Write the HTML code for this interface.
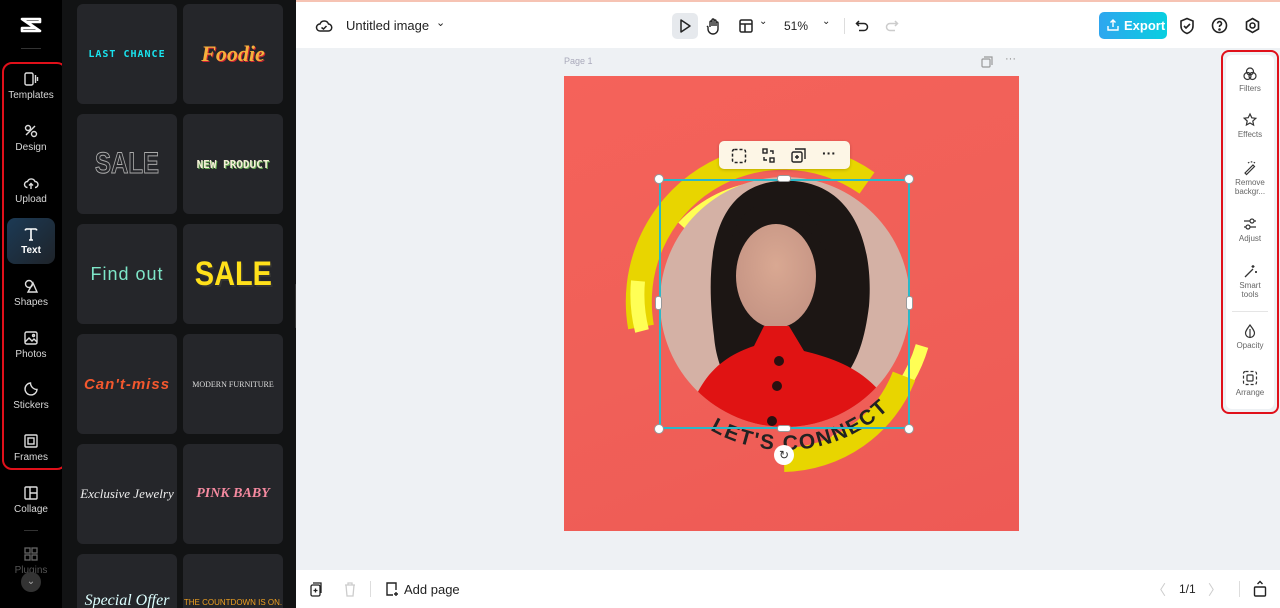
<!DOCTYPE html>
<html><head><meta charset="utf-8">
<style>
*{box-sizing:border-box;margin:0;padding:0}
html,body{width:1280px;height:608px;overflow:hidden}
body{font-family:"Liberation Sans",sans-serif;background:#eef1f4;position:relative}
.abs{position:absolute}
#rail{left:0;top:0;width:62px;height:608px;background:#000;overflow:hidden}
#panel{left:62px;top:0;width:234px;height:608px;background:#121314;overflow:hidden}
.ri{position:absolute;left:0;width:62px;text-align:center;color:#d8d8d8;font-size:10px}
.ri svg{display:block;margin:0 auto 3px}
.card{position:absolute;width:100px;height:100px;background:#25262a;border-radius:6px;display:flex;align-items:center;justify-content:center;overflow:hidden}
#top{left:296px;top:0;width:984px;height:48px;background:#fff;border-top:2px solid #f6c3b3}
#bot{left:296px;top:570px;width:984px;height:38px;background:#fff}
.rp{position:absolute;left:0;width:48px;text-align:center;font-size:8px;color:#666}
.rp svg{display:block;margin:0 auto 2px}
.h{position:absolute;background:#fff;border:1px solid #999;z-index:5}
</style></head><body>
<div id="rail" class="abs">
  <svg class="abs" style="left:19px;top:16px" width="24" height="18" viewBox="0 0 24 18"><path d="M3 3 L21 3 L21 6 L8 6 L21 15 L3 15 L3 12 L16 12 Z" fill="none" stroke="#fff" stroke-width="2.6" stroke-linejoin="round"/></svg>
  <div class="abs" style="left:21px;top:48px;width:20px;height:1px;background:#333"></div>
  <div class="abs" style="left:2px;top:62px;width:65px;height:408px;border:2px solid #e0101a;border-radius:10px"></div>
  <div class="abs" style="left:7px;top:218px;width:48px;height:46px;border-radius:8px;background:linear-gradient(135deg,#1c3a55,#1e2329)"></div>
  <div class="ri" style="top:71px"><svg width="16" height="16" viewBox="0 0 16 16" fill="none" stroke="#ddd" stroke-width="1.4"><rect x="2" y="2" width="8" height="12" rx="1.5"/><path d="M12.5 4v8M14.5 6v4"/></svg>Templates</div>
  <div class="ri" style="top:123px"><svg width="16" height="16" viewBox="0 0 16 16" fill="none" stroke="#ddd" stroke-width="1.4"><circle cx="5" cy="5" r="2.5"/><circle cx="11" cy="11" r="2.5"/><path d="M3 12L12 3"/></svg>Design</div>
  <div class="ri" style="top:175px"><svg width="16" height="16" viewBox="0 0 16 16" fill="none" stroke="#ddd" stroke-width="1.4"><path d="M4.5 12.5a3 3 0 0 1 0-6 4 4 0 0 1 7.5 0 3 3 0 0 1 0 6M8 14V8.5M6 10.5l2-2 2 2"/></svg>Upload</div>
  <div class="ri" style="top:226px;color:#fff;font-weight:bold"><svg width="16" height="16" viewBox="0 0 16 16" fill="none" stroke="#fff" stroke-width="1.6"><path d="M2.5 3h11M8 3v11M2.5 3v1.5M13.5 3v1.5M6 14h4"/></svg>Text</div>
  <div class="ri" style="top:278px"><svg width="16" height="16" viewBox="0 0 16 16" fill="none" stroke="#ddd" stroke-width="1.4"><circle cx="6" cy="6" r="3.5"/><path d="M10 5l4 9H5z"/></svg>Shapes</div>
  <div class="ri" style="top:330px"><svg width="16" height="16" viewBox="0 0 16 16" fill="none" stroke="#ddd" stroke-width="1.4"><rect x="2" y="2" width="12" height="12" rx="1.5"/><path d="M2 12l4-4 3 3 2-2 3 3"/><circle cx="10.5" cy="5.5" r="1"/></svg>Photos</div>
  <div class="ri" style="top:381px"><svg width="16" height="16" viewBox="0 0 16 16" fill="none" stroke="#ddd" stroke-width="1.4"><path d="M14 8.5A6 6 0 1 1 7.5 2c0 3.5 3 6.5 6.5 6.5z"/></svg>Stickers</div>
  <div class="ri" style="top:433px"><svg width="16" height="16" viewBox="0 0 16 16" fill="none" stroke="#ddd" stroke-width="1.4"><rect x="2" y="2" width="12" height="12" rx="1"/><rect x="5" y="5" width="6" height="6"/></svg>Frames</div>
  <div class="ri" style="top:485px"><svg width="16" height="16" viewBox="0 0 16 16" fill="none" stroke="#ddd" stroke-width="1.4"><rect x="2" y="2" width="12" height="12" rx="1"/><path d="M7 2v12M7 8h7"/></svg>Collage</div>
  <div class="abs" style="left:24px;top:530px;width:14px;height:1px;background:#333"></div>
  <div class="ri" style="top:546px;color:#555"><svg width="16" height="16" viewBox="0 0 16 16" fill="none" stroke="#666" stroke-width="1.3"><rect x="2" y="2" width="5" height="5"/><rect x="9" y="2" width="5" height="5"/><rect x="2" y="9" width="5" height="5"/><rect x="9" y="9" width="5" height="5"/></svg>Plugins</div>
  <div class="abs" style="left:21px;top:572px;width:20px;height:20px;border-radius:50%;background:#333;color:#aaa;font-size:10px;text-align:center;line-height:20px">&#8964;</div>
</div>
<div id="panel" class="abs">
  <div class="card" style="left:15px;top:4px"><span style="color:#19e3ee;font-family:'DejaVu Sans Mono',monospace;font-weight:bold;font-size:10px;letter-spacing:1px">LAST CHANCE</span></div>
  <div class="card" style="left:121px;top:4px"><span style="color:#f6b03c;font-family:'Liberation Serif',serif;font-style:italic;font-weight:bold;font-size:22px;text-shadow:1px 1px 0 #c23">Foodie</span></div>
  <div class="card" style="left:15px;top:114px"><span style="color:transparent;-webkit-text-stroke:1px #aaa;font-weight:bold;font-size:30px;transform:scaleX(.8);display:inline-block">SALE</span></div>
  <div class="card" style="left:121px;top:114px"><span style="color:#f5f0d8;font-family:'DejaVu Sans Mono',monospace;font-weight:bold;font-size:11px;text-shadow:1px 1px 0 #6a5">NEW PRODUCT</span></div>
  <div class="card" style="left:15px;top:224px"><span style="color:#7ee6c8;font-size:18px;letter-spacing:1px">Find out</span></div>
  <div class="card" style="left:121px;top:224px"><span style="color:#ffe01a;font-weight:bold;font-size:34px;transform:scaleX(.85);display:inline-block;text-shadow:2px 2px 0 #333">SALE</span></div>
  <div class="card" style="left:15px;top:334px"><span style="color:#f4582e;font-weight:bold;font-style:italic;font-size:15px;letter-spacing:1px">Can't-miss</span></div>
  <div class="card" style="left:121px;top:334px"><span style="color:#ddd;font-family:'Liberation Serif',serif;font-size:8px">MODERN FURNITURE</span></div>
  <div class="card" style="left:15px;top:444px"><span style="color:#eee;font-family:'Liberation Serif',serif;font-style:italic;font-size:13px">Exclusive Jewelry</span></div>
  <div class="card" style="left:121px;top:444px"><span style="color:#f58aa0;font-family:'Liberation Serif',serif;font-weight:bold;font-style:italic;font-size:14px">PINK BABY</span></div>
  <div class="card" style="left:15px;top:554px;height:54px;border-radius:6px 6px 0 0;align-items:flex-start;padding-top:38px"><span style="color:#dff;font-family:'Liberation Serif',serif;font-style:italic;font-size:16px">Special Offer</span></div>
  <div class="card" style="left:121px;top:554px;height:54px;border-radius:6px 6px 0 0;align-items:flex-start;padding-top:44px"><span style="color:#f0a020;font-size:8px">THE COUNTDOWN IS ON.</span></div>
  <div class="abs" style="left:233px;top:284px;width:6px;height:44px;background:#333;border-radius:0 6px 6px 0"></div>
</div>
<div id="top" class="abs">
  <svg class="abs" style="left:19px;top:16px" width="18" height="16" viewBox="0 0 18 16" fill="none" stroke="#222" stroke-width="1.5"><path d="M5 13a3.5 3.5 0 0 1 0-7 4.5 4.5 0 0 1 8.5 0A3.5 3.5 0 0 1 13 13z"/><path d="M6.5 9.5l2 1.5 3-3"/></svg>
  <div class="abs" style="left:50px;top:16px;font-size:13px;color:#222">Untitled image</div>
  <div class="abs" style="left:140px;top:14px;font-size:11px;color:#222">&#8964;</div>
  <div class="abs" style="left:376px;top:11px;width:26px;height:26px;border-radius:5px;background:#e6e9ed"></div>
  <svg class="abs" style="left:382px;top:16px" width="14" height="16" viewBox="0 0 14 16" fill="none" stroke="#222" stroke-width="1.5"><path d="M3 2l9 6-9 6z" stroke-linejoin="round"/></svg>
  <svg class="abs" style="left:410px;top:15px" width="16" height="18" viewBox="0 0 16 18" fill="none" stroke="#222" stroke-width="1.4"><path d="M4 10V5a1 1 0 0 1 2 0v4V3a1 1 0 0 1 2 0v6V4a1 1 0 0 1 2 0v5V6a1 1 0 0 1 2 0v6a5 5 0 0 1-10 0v-2l-1-1"/></svg>
  <svg class="abs" style="left:443px;top:17px" width="14" height="14" viewBox="0 0 14 14" fill="none" stroke="#222" stroke-width="1.5"><rect x="1" y="1" width="12" height="12" rx="1.5"/><path d="M1 5h12M6 5v8"/></svg>
  <div class="abs" style="left:463px;top:14px;font-size:10px;color:#222">&#8964;</div>
  <div class="abs" style="left:488px;top:17px;font-size:12px;color:#222">51%</div>
  <div class="abs" style="left:526px;top:14px;font-size:10px;color:#222">&#8964;</div>
  <div class="abs" style="left:548px;top:16px;width:1px;height:16px;background:#ddd"></div>
  <svg class="abs" style="left:559px;top:17px" width="14" height="14" viewBox="0 0 14 14" fill="none" stroke="#222" stroke-width="1.5"><path d="M4 2L1.5 4.5 4 7M1.5 4.5H9a3.5 3.5 0 0 1 0 7H4"/></svg>
  <svg class="abs" style="left:589px;top:17px" width="14" height="14" viewBox="0 0 14 14" fill="none" stroke="#ccc" stroke-width="1.5"><path d="M10 2l2.5 2.5L10 7M12.5 4.5H5a3.5 3.5 0 0 0 0 7h5"/></svg>
  <div class="abs" style="left:803px;top:10px;width:68px;height:27px;border-radius:5px;background:linear-gradient(90deg,#2ea6ef,#08cfe0);color:#fff;font-weight:bold;font-size:13px;line-height:27px;padding-left:25px">Export</div>
  <svg class="abs" style="left:811px;top:17px" width="12" height="12" viewBox="0 0 12 12" fill="none" stroke="#fff" stroke-width="1.4"><path d="M6 8V1M3.5 3.5L6 1l2.5 2.5M1 7v4h10V7"/></svg>
  <svg class="abs" style="left:883px;top:15px" width="16" height="18" viewBox="0 0 16 18" fill="none" stroke="#222" stroke-width="1.6"><path d="M8 1.5l6 2.5v5c0 4-3 6.5-6 7.5-3-1-6-3.5-6-7.5V4z"/><path d="M5 9l2 2 4-4"/></svg>
  <svg class="abs" style="left:915px;top:15px" width="17" height="17" viewBox="0 0 17 17" fill="none" stroke="#222" stroke-width="1.6"><circle cx="8.5" cy="8.5" r="7"/><path d="M6.5 6.5a2 2 0 1 1 2.5 2c-.5.2-.5.8-.5 1.5"/><circle cx="8.5" cy="12.5" r=".5" fill="#222"/></svg>
  <svg class="abs" style="left:948px;top:15px" width="17" height="17" viewBox="0 0 17 17" fill="none" stroke="#222" stroke-width="1.6"><path d="M8.5 1.5l6 3.5v7l-6 3.5-6-3.5V5z"/><circle cx="8.5" cy="8.5" r="2.5"/></svg>
</div>
<div class="abs" style="left:564px;top:56px;font-size:9px;color:#aab">Page 1</div>
<svg class="abs" style="left:981px;top:56px" width="12" height="12" viewBox="0 0 12 12" fill="none" stroke="#999" stroke-width="1.2"><rect x="1" y="3" width="8" height="8" rx="1"/><path d="M3 1h8v8"/></svg>
<div class="abs" style="left:1005px;top:53px;font-size:11px;color:#888">···</div>

<div class="abs" style="left:564px;top:76px;width:455px;height:455px;background:linear-gradient(160deg,#f5625a,#f06058 50%,#ee5a55);overflow:hidden">
<svg width="455" height="455" viewBox="0 0 455 455">
  <path d="M77 251 A145 145 0 0 1 303 107" stroke="#e8d500" stroke-width="26" fill="none"/>
  <path d="M118 150 A125 125 0 0 1 200 110" stroke="#ffff55" stroke-width="10" fill="none"/>
  <path d="M80 205 A148 148 0 0 0 84 255" stroke="#ffff55" stroke-width="14" fill="none" transform="translate(-6,0)"/>
  <path d="M358 270 A148 148 0 0 1 270 366" stroke="#ffff55" stroke-width="13" fill="none"/>
  <path d="M340 300 A132 132 0 0 1 220 384" stroke="#e8d500" stroke-width="24" fill="none"/>
  <defs><clipPath id="c"><circle cx="221" cy="226" r="125"/></clipPath>
  <radialGradient id="f" cx=".5" cy=".4" r=".6"><stop offset="0" stop-color="#d9a892"/><stop offset="1" stop-color="#c59484"/></radialGradient></defs>
  <g clip-path="url(#c)">
    <rect x="90" y="95" width="270" height="270" fill="#d4b1a5"/>
    <path d="M150 260 C140 180 150 110 215 105 C290 100 310 170 305 230 C300 270 290 300 260 320 L170 320 C160 300 152 285 150 260z" fill="#1c1614"/>
    <ellipse cx="212" cy="200" rx="40" ry="52" fill="url(#f)"/>
    <path d="M168 160 C185 110 250 110 262 175 C240 135 200 145 168 160z" fill="#1c1614"/>
    <path d="M120 360 C130 300 160 280 190 270 L200 250 L225 250 L240 275 C280 285 320 300 340 360z" fill="#e01313"/>
    <circle cx="215" cy="285" r="5" fill="#2a1010"/><circle cx="213" cy="310" r="5" fill="#2a1010"/><circle cx="208" cy="345" r="5" fill="#2a1010"/>
  </g>
  <path id="arc" d="M92 300 A150 150 0 0 0 335 322" fill="none"/>
  <text font-family="Liberation Sans,sans-serif" font-weight="bold" font-size="21" fill="#222" letter-spacing="2"><textPath href="#arc" startOffset="77">LET'S CONNECT</textPath></text>
</svg>
</div>
<!-- selection -->
<div class="abs" style="left:659px;top:179px;width:251px;height:250px;border:2px solid #2bb8c8;z-index:4"></div>
<div class="h" style="left:654px;top:174px;width:10px;height:10px;border-radius:50%"></div>
<div class="h" style="left:904px;top:174px;width:10px;height:10px;border-radius:50%"></div>
<div class="h" style="left:654px;top:424px;width:10px;height:10px;border-radius:50%"></div>
<div class="h" style="left:904px;top:424px;width:10px;height:10px;border-radius:50%"></div>
<div class="h" style="left:777px;top:175px;width:14px;height:7px;border-radius:3px"></div>
<div class="h" style="left:777px;top:425px;width:14px;height:7px;border-radius:3px"></div>
<div class="h" style="left:655px;top:296px;width:7px;height:14px;border-radius:3px"></div>
<div class="h" style="left:906px;top:296px;width:7px;height:14px;border-radius:3px"></div>
<div class="abs" style="left:774px;top:445px;width:20px;height:20px;border-radius:50%;background:#fff;color:#333;font-size:12px;text-align:center;line-height:20px;z-index:5">&#8635;</div>
<div class="abs" style="left:719px;top:141px;width:131px;height:28px;border-radius:5px;background:#fdf6e6;box-shadow:0 1px 3px rgba(0,0,0,.2);z-index:5"></div>
<svg class="abs" style="left:731px;top:148px;z-index:6" width="16" height="16" viewBox="0 0 16 16" fill="none" stroke="#222" stroke-width="1.5" stroke-dasharray="3 2"><rect x="1.5" y="1.5" width="13" height="13" rx="2"/></svg>
<svg class="abs" style="left:762px;top:148px;z-index:6" width="14" height="16" viewBox="0 0 14 16" fill="none" stroke="#222" stroke-width="1.4"><rect x="1" y="1" width="4" height="4"/><rect x="8" y="10" width="4" height="4"/><path d="M8 3h3v3M5 12H2V9"/></svg>
<svg class="abs" style="left:791px;top:148px;z-index:6" width="15" height="15" viewBox="0 0 15 15" fill="none" stroke="#222" stroke-width="1.4"><rect x="1" y="4" width="10" height="10" rx="1.5"/><path d="M4 1h10v10M6 7v4M4 9h4"/></svg>
<div class="abs" style="left:822px;top:145px;font-size:14px;color:#222;font-weight:bold;z-index:6">···</div>

<!-- right panel -->
<div class="abs" style="left:1221px;top:50px;width:58px;height:364px;border:2px solid #e0101a;border-radius:8px"></div>
<div class="abs" style="left:1226px;top:55px;width:48px;height:354px;background:#fff;border-radius:6px">
  <div class="rp" style="top:11px"><svg width="16" height="16" viewBox="0 0 16 16" fill="none" stroke="#333" stroke-width="1.2"><circle cx="8" cy="5.5" r="3.5"/><circle cx="5.5" cy="10" r="3.5"/><circle cx="10.5" cy="10" r="3.5"/></svg>Filters</div>
  <div class="rp" style="top:57px"><svg width="16" height="16" viewBox="0 0 16 16" fill="none" stroke="#333" stroke-width="1.2"><path d="M8 2l1.8 3.8 4 .5-3 2.8.8 4L8 11l-3.6 2 .8-4-3-2.8 4-.5z"/></svg>Effects</div>
  <div class="rp" style="top:105px;line-height:9px"><svg width="16" height="16" viewBox="0 0 16 16" fill="none" stroke="#333" stroke-width="1.2"><path d="M3 13L11 5l1.5 1.5-8 8z"/><path d="M6 3a6 6 0 0 1 7 0" stroke-dasharray="1.5 1.5"/></svg>Remove<br>backgr...</div>
  <div class="rp" style="top:161px"><svg width="16" height="16" viewBox="0 0 16 16" fill="none" stroke="#333" stroke-width="1.2"><path d="M2 5h12M2 11h12"/><circle cx="10" cy="5" r="2" fill="#fff"/><circle cx="6" cy="11" r="2" fill="#fff"/></svg>Adjust</div>
  <div class="rp" style="top:208px;line-height:9px"><svg width="16" height="16" viewBox="0 0 16 16" fill="none" stroke="#333" stroke-width="1.3"><path d="M3 14l8-8M11 2v3M9.5 3.5h3M14 8v2M13 9h2"/></svg>Smart<br>tools</div>
  <div class="abs" style="left:6px;top:256px;width:36px;height:1px;background:#e5e5e5"></div>
  <div class="rp" style="top:268px"><svg width="16" height="16" viewBox="0 0 16 16" fill="none" stroke="#333" stroke-width="1.2"><path d="M8 2C5 6 3.5 8 3.5 10a4.5 4.5 0 0 0 9 0C12.5 8 11 6 8 2z"/><path d="M8 6v8" /></svg>Opacity</div>
  <div class="rp" style="top:315px"><svg width="16" height="16" viewBox="0 0 16 16" fill="none" stroke="#333" stroke-width="1.2"><rect x="1.5" y="1.5" width="13" height="13" rx="2" stroke-dasharray="3 2"/><rect x="5" y="5" width="6" height="6" rx="1"/></svg>Arrange</div>
</div>

<div id="bot" class="abs">
  <svg class="abs" style="left:14px;top:12px" width="13" height="15" viewBox="0 0 13 15" fill="none" stroke="#222" stroke-width="1.3"><rect x="1" y="3" width="9" height="11" rx="1.5"/><path d="M3 1h8v10M5.5 6.5v4M3.5 8.5h4"/></svg>
  <svg class="abs" style="left:48px;top:12px" width="12" height="15" viewBox="0 0 12 15" fill="none" stroke="#ccc" stroke-width="1.3"><path d="M1 3h10M4 3V1h4v2M2 3l1 11h6l1-11"/></svg>
  <div class="abs" style="left:74px;top:11px;width:1px;height:16px;background:#ddd"></div>
  <svg class="abs" style="left:89px;top:11px" width="14" height="16" viewBox="0 0 14 16" fill="none" stroke="#222" stroke-width="1.4"><path d="M8 14H2V2h9v7M11 11v4M9 13h4"/></svg>
  <div class="abs" style="left:108px;top:12px;font-size:13px;color:#222">Add page</div>
  <div class="abs" style="left:856px;top:10px;font-size:14px;color:#ccc">&#12296;</div>
  <div class="abs" style="left:883px;top:12px;font-size:12px;color:#222">1/1</div>
  <div class="abs" style="left:912px;top:10px;font-size:14px;color:#ccc">&#12297;</div>
  <div class="abs" style="left:943px;top:11px;width:1px;height:16px;background:#ddd"></div>
  <svg class="abs" style="left:957px;top:10px" width="14" height="17" viewBox="0 0 14 17" fill="none" stroke="#222" stroke-width="1.4"><rect x="1.5" y="7" width="11" height="9" rx="1"/><path d="M4.5 4L7 1.5 9.5 4"/></svg>
</div>
</body></html>
